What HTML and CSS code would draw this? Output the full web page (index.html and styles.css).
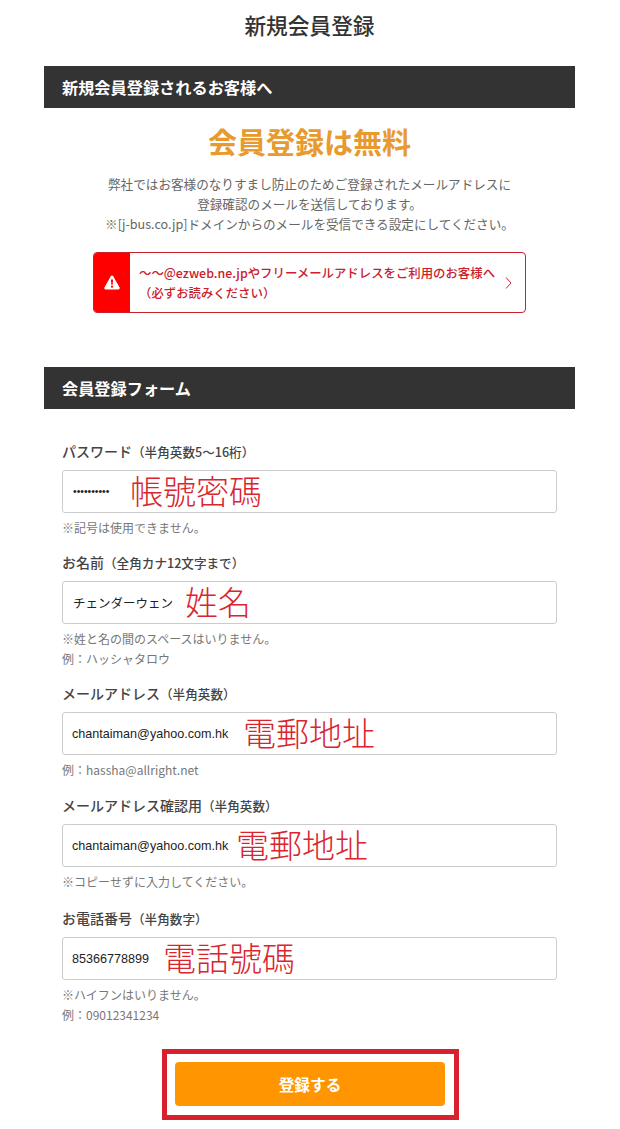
FILE: index.html
```html
<!DOCTYPE html>
<html lang="ja">
<head>
  <meta charset="UTF-8" />
  <title>新規会員登録</title>
  <meta name="viewport" content="width=device-width, initial-scale=1.0" />
  <link rel="stylesheet" href="styles.css">
</head>
<body>
  <div class="container">
    <h1>新規会員登録</h1>

    <h2 class="section-head">新規会員登録されるお客様へ</h2>
    <div class="intro">
      <p class="free">会員登録は無料</p>
      <p class="lead">弊社ではお客様のなりすまし防止のためご登録されたメールアドレスに<br>登録確認のメールを送信しております。<br>※[j-bus.co.jp]ドメインからのメールを受信できる設定にしてください。</p>
      <a class="alert" href="#">
        <span class="alert-icon">
          <svg width="16" height="15" viewBox="0 0 16 15"><path d="M8 .5c-.5 0-.9.3-1.200.8L.4 12.400c-.5.9.1 2.100 1.200 2.100h12.800c1.100 0 1.700-1.200 1.200-2.100L9.200 1.300C8.900.8 8.500.5 8 .5z" fill="#fff"/><path d="M7 4.500h2l-.3 5.200H7.300z" fill="#f00"/><circle cx="8" cy="11.700" r="1.100" fill="#f00"/></svg>
        </span>
        <span class="alert-text">～～@ezweb.ne.jpやフリーメールアドレスをご利用のお客様へ<br>（必ずお読みください）</span>
        <svg class="alert-arrow" width="7" height="12" viewBox="0 0 7 12"><path d="M1 .5l5 5.500-5 5.500" fill="none" stroke="#c9202c" stroke-width="1"/></svg>
      </a>
    </div>

    <h2 class="section-head">会員登録フォーム</h2>
    <form class="form">
      <div class="field field-long">
        <label>パスワード<small>（半角英数5～16桁）</small></label>
        <div class="input-wrap">
          <input class="input input-pass" type="password" value="abcdefghij">
          <span class="mark mark-pass">帳號密碼</span>
        </div>
        <p class="note">※記号は使用できません。</p>
      </div>
      <div class="field field-long">
        <label>お名前<small>（全角カナ12文字まで）</small></label>
        <div class="input-wrap">
          <input class="input input-kana" type="text" value="チェンダーウェン">
          <span class="mark mark-name">姓名</span>
        </div>
        <p class="note">※姓と名の間のスペースはいりません。</p>
        <p class="note">例：ハッシャタロウ</p>
      </div>
      <div class="field">
        <label>メールアドレス<small>（半角英数）</small></label>
        <div class="input-wrap">
          <input class="input" type="text" value="chantaiman@yahoo.com.hk">
          <span class="mark mark-mail">電郵地址</span>
        </div>
        <p class="note">例：hassha@allright.net</p>
      </div>
      <div class="field field-gap">
        <label>メールアドレス確認用<small>（半角英数）</small></label>
        <div class="input-wrap">
          <input class="input" type="text" value="chantaiman@yahoo.com.hk">
          <span class="mark mark-mail2">電郵地址</span>
        </div>
        <p class="note">※コピーせずに入力してください。</p>
      </div>
      <div class="field field-long">
        <label>お電話番号<small>（半角数字）</small></label>
        <div class="input-wrap">
          <input class="input" type="text" value="85366778899">
          <span class="mark mark-tel">電話號碼</span>
        </div>
        <p class="note">※ハイフンはいりません。</p>
        <p class="note">例：09012341234</p>
      </div>
      <div class="submit-box">
        <button class="btn" type="button">登録する</button>
      </div>
    </form>
  </div>
</body>
</html>
```

FILE: styles.css
```css
* {
  box-sizing: border-box;
}

body {
  margin: 0;
  background-color: #fff;
  color: #333;
  font-family: "Noto Sans CJK JP", "Noto Sans", sans-serif;
}

.container {
  width: 531px;
  margin-left: 44px;
}

h1 {
  margin: 0;
  padding-top: 10px;
  height: 66px;
  font-size: 21.700px;
  line-height: 30px;
  font-weight: 500;
  text-align: center;
}

.section-head {
  margin: 0;
  height: 42px;
  padding: 0 18px;
  background-color: #333;
  color: #fff;
  font-size: 16.200px;
  font-weight: 700;
  line-height: 42px;
}

.intro {
  height: 259px;
  padding-top: 14px;
  text-align: center;
}

.free {
  margin: 0;
  color: #e89a2f;
  font-size: 29px;
  font-weight: 700;
  line-height: 38px;
}

.lead {
  margin: 14px 0 0;
  color: #666;
  font-size: 12.600px;
  line-height: 20px;
}

.alert {
  display: flex;
  align-items: center;
  width: 433px;
  height: 61px;
  margin: 18px 0 0 49px;
  border: 1px solid #c9202c;
  border-radius: 4px;
  color: #c9202c;
  text-align: left;
  text-decoration: none;
  overflow: hidden;
}

.alert-icon {
  display: flex;
  align-items: center;
  justify-content: center;
  flex: none;
  width: 36px;
  height: 100%;
  background-color: #f00;
}

.alert-text {
  flex: 1;
  padding-left: 9px;
  font-size: 12.400px;
  font-weight: 500;
  line-height: 20px;
}

.alert-arrow {
  flex: none;
  margin-right: 13px;
}

.form {
  padding: 32px 18px 0;
}

.field {
  margin-bottom: 17px;
}

.field-long {
  margin-bottom: 16px;
}

.field-gap {
  margin-bottom: 18px;
}

label {
  display: block;
  height: 21px;
  color: #444;
  font-size: 14px;
  font-weight: 500;
  line-height: 21px;
}

small {
  font-size: 12.600px;
  font-weight: 500;
}

.input-wrap {
  position: relative;
  margin-top: 8px;
}

.input {
  display: block;
  width: 100%;
  height: 43px;
  padding: 0 9px;
  border: 1px solid #ccc;
  border-radius: 3px;
  background-color: #fff;
  color: #222;
  font-family: "Liberation Sans", sans-serif;
  font-size: 12.600px;
}

.input-pass {
  padding-left: 10px;
  font-size: 10.400px;
}

.input-kana {
  padding-left: 10px;
  font-family: "Noto Sans CJK JP", sans-serif;
  font-size: 12.500px;
}

/* red notes written over the screenshot */
.mark {
  position: absolute;
  top: -1px;
  color: #d9252e;
  font-family: "Noto Sans CJK TC", sans-serif;
  font-size: 33px;
  font-weight: 300;
  line-height: 42px;
}

.mark-pass { left: 68px; }
.mark-name { left: 123px; }
.mark-mail { left: 181px; }
.mark-mail2 { left: 174px; }
.mark-tel { left: 101px; }

.note {
  margin: 7px 0 0;
  color: #777;
  font-size: 12px;
  line-height: 16px;
}

.note + .note {
  margin-top: 4px;
}

.submit-box {
  display: flex;
  align-items: flex-start;
  width: 297px;
  height: 71px;
  margin: 26px 0 0 100px;
  padding: 8px;
  border: 5px solid #d9202e;
}

.btn {
  width: 270px;
  height: 44px;
  flex: none;
  border: none;
  border-radius: 4px;
  background-color: #ff9500;
  color: #fff;
  font-family: "Noto Sans CJK JP", sans-serif;
  font-size: 15.700px;
  font-weight: 700;
}
```
